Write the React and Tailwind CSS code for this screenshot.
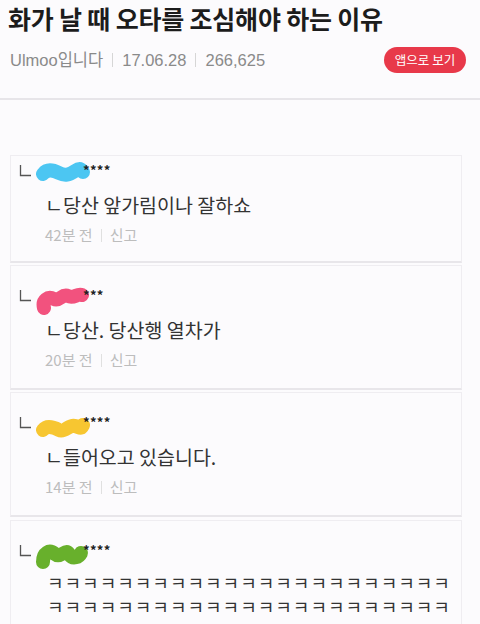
import React from "react";

const comments = [
  {
    color: "#4cc6f2",
    stars: "****",
    path: "M8 13 C12 8, 18 9, 24 12 S 34 14, 40 10 S 46 9, 48 11",
    text: "ㄴ당산 앞가림이나 잘하쇼",
    time: "42분 전",
    pad: "pt-[5px]",
    height: "h-[108px]",
  },
  {
    color: "#f2527e",
    stars: "***",
    path: "M9 22 C7 14, 13 10, 19 13 S 27 7, 33 10 S 42 7, 47 9",
    text: "ㄴ당산. 당산행 열차가",
    time: "20분 전",
    pad: "pt-[20px]",
    height: "h-[125px]",
  },
  {
    color: "#f7c631",
    stars: "****",
    path: "M8 17 C12 12, 18 14, 24 17 S 34 11, 40 13 S 46 16, 48 12",
    text: "ㄴ들어오고 있습니다.",
    time: "14분 전",
    pad: "pt-[20px]",
    height: "h-[125px]",
  },
];

const Corner = () => (
  <svg width="12" height="12" viewBox="0 0 12 12" className="shrink-0">
    <path d="M1.5 0 V10.5 H12" fill="none" stroke="#555" strokeWidth="1.3" />
  </svg>
);

const Scribble = ({ color, path }) => (
  <svg width="56" height="30" viewBox="0 0 56 30" className="shrink-0 -ml-[6px] mt-[10px]">
    <path
      d={path}
      fill="none"
      stroke={color}
      strokeWidth="14"
      strokeLinecap="round"
      strokeLinejoin="round"
    />
  </svg>
);

const NameRow = ({ color, path, stars }) => (
  <div className="flex items-center h-5 pl-[8px]">
    <Corner />
    <div className="ml-[10px] flex items-center">
      <Scribble color={color} path={path} />
      <span className="-ml-[8px] text-[13px] leading-none font-bold text-[#222] tracking-[0.3px] -mt-[4px]">
        {stars}
      </span>
    </div>
  </div>
);

const App = () => {
  return (
    <div className="w-[480px] h-[624px] overflow-hidden bg-[#fcfbfd] font-['Noto_Sans_CJK_KR',sans-serif]">
      {/* Header */}
      <div className="h-[100px] border-b-2 border-[#e7e5e9] px-2 pt-[2px]">
        <h1 className="text-[25px] leading-[32px] font-bold text-[#1c1c1c] tracking-[-0.2px] whitespace-nowrap">
          화가 날 때 오타를 조심해야 하는 이유
        </h1>
        <div className="mt-[13px] flex items-center justify-between pr-[6px]">
          <div className="flex items-center text-[16.5px] text-[#8a8a8a] pl-[2px] font-['Liberation_Sans','Noto_Sans_CJK_KR',sans-serif]">
            <span>Ulmoo입니다</span>
            <span className="mx-[9px] h-[14px] w-px bg-[#d6d6d6]" />
            <span>17.06.28</span>
            <span className="mx-[9px] h-[14px] w-px bg-[#d6d6d6]" />
            <span>266,625</span>
          </div>
          <button className="h-[26px] w-[82px] rounded-full bg-[#e8394a] text-white text-[12.5px] leading-none">
            앱으로 보기
          </button>
        </div>
      </div>

      {/* Comments */}
      <div className="pt-[55px] pl-[10px] pr-[18px] flex flex-col gap-[2px]">
        {comments.map((c) => (
          <div
            key={c.time}
            className={`${c.height} ${c.pad} border border-[#efedf1] border-b-2 border-b-[#e8e6ea] bg-[#fcfbfd]`}
          >
            <NameRow color={c.color} path={c.path} stars={c.stars} />
            <p className="mt-[11px] pl-[34px] text-[19.5px] leading-[26px] text-[#333] whitespace-nowrap">
              {c.text}
            </p>
            <div className="mt-[6px] pl-[34px] flex items-center text-[15px] leading-[22px] text-[#bdbdbd]">
              <span>{c.time}</span>
              <span className="mx-[8px] h-[13px] w-px bg-[#e0e0e0]" />
              <span>신고</span>
            </div>
          </div>
        ))}
        <div className="h-[110px] pt-[20px] border border-[#efedf1] bg-[#fcfbfd] mt-[1px]">
          <NameRow
            color="#68b02c"
            path="M8 21 C8 12, 14 8, 20 13 S 30 7, 34 13 S 44 16, 46 12"
            stars="****"
          />
          <p className="mt-[9px] pl-[36px] text-[18px] leading-[24px] text-[#333] tracking-[1px] whitespace-nowrap">
            ㅋㅋㅋㅋㅋㅋㅋㅋㅋㅋㅋㅋㅋㅋㅋㅋㅋㅋㅋㅋㅋㅋㅋ
            <br />
            ㅋㅋㅋㅋㅋㅋㅋㅋㅋㅋㅋㅋㅋㅋㅋㅋㅋㅋㅋㅋㅋㅋㅋ
          </p>
        </div>
      </div>
    </div>
  );
};

export default App;
